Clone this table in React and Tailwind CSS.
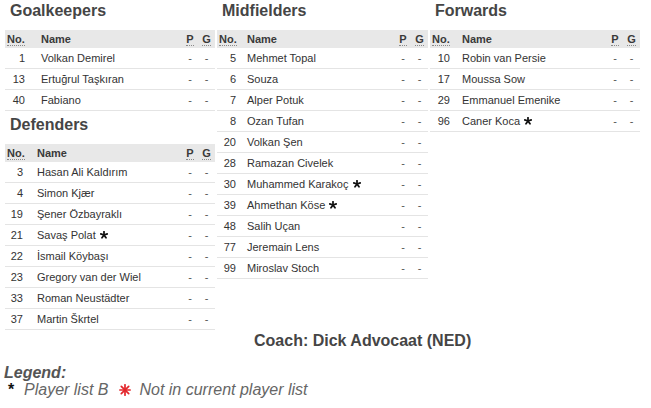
const goalkeepers = [
  { no: 1, name: 'Volkan Demirel' },
  { no: 13, name: 'Ertuğrul Taşkıran' },
  { no: 40, name: 'Fabiano' },
];

const defenders = [
  { no: 3, name: 'Hasan Ali Kaldırım' },
  { no: 4, name: 'Simon Kjær' },
  { no: 19, name: 'Şener Özbayraklı' },
  { no: 21, name: 'Savaş Polat', b: true },
  { no: 22, name: 'İsmail Köybaşı' },
  { no: 23, name: 'Gregory van der Wiel' },
  { no: 33, name: 'Roman Neustädter' },
  { no: 37, name: 'Martin Škrtel' },
];

const midfielders = [
  { no: 5, name: 'Mehmet Topal' },
  { no: 6, name: 'Souza' },
  { no: 7, name: 'Alper Potuk' },
  { no: 8, name: 'Ozan Tufan' },
  { no: 20, name: 'Volkan Şen' },
  { no: 28, name: 'Ramazan Civelek' },
  { no: 30, name: 'Muhammed Karakoç', b: true },
  { no: 39, name: 'Ahmethan Köse', b: true },
  { no: 48, name: 'Salih Uçan' },
  { no: 77, name: 'Jeremain Lens' },
  { no: 99, name: 'Miroslav Stoch' },
];

const forwards = [
  { no: 10, name: 'Robin van Persie' },
  { no: 17, name: 'Moussa Sow' },
  { no: 29, name: 'Emmanuel Emenike' },
  { no: 96, name: 'Caner Koca', b: true },
];

function Star() {
  return (
    <svg width="8" height="8" viewBox="0 0 10 10" className="inline-block ml-[4px] align-[0px]">
      <g stroke="#111" strokeWidth="2.2" strokeLinecap="round">
        <line x1="5" y1="5" x2="5" y2="0.8" />
        <line x1="5" y1="5" x2="9.1" y2="3.7" />
        <line x1="5" y1="5" x2="7.5" y2="8.5" />
        <line x1="5" y1="5" x2="2.5" y2="8.5" />
        <line x1="5" y1="5" x2="0.9" y2="3.7" />
      </g>
    </svg>
  );
}

function RedStar() {
  return (
    <svg width="12" height="12" viewBox="0 0 12 12" className="inline-block">
      <g stroke="#e3262b" strokeWidth="1.7" strokeLinecap="round">
        <line x1="6" y1="0.8" x2="6" y2="11.2" />
        <line x1="0.8" y1="6" x2="11.2" y2="6" />
        <line x1="2.3" y1="2.3" x2="9.7" y2="9.7" />
        <line x1="9.7" y1="2.3" x2="2.3" y2="9.7" />
      </g>
    </svg>
  );
}

function Abbr({ children }) {
  return <span className="border-b border-dotted border-[#8a8a8a] leading-[12px]">{children}</span>;
}

function Squad({ title, players, numPad, namePad, top }) {
  return (
    <div>
      <h2 className={`${top} mb-[10px] pl-[5px] text-[16px] leading-[18px] font-bold text-[#454545]`}>
        {title}
      </h2>
      <div className="text-[11px] text-[#333]">
        <div className="flex h-[18px] items-center bg-[#e8e8e8] font-bold text-[#3a3a3a]">
          <div className="w-[22px] pl-[2px]">
            <Abbr>No.</Abbr>
          </div>
          <div className={`flex-1 ${namePad}`}>Name</div>
          <div className="w-[16px] text-center">
            <Abbr>P</Abbr>
          </div>
          <div className="w-[17px] text-center">
            <Abbr>G</Abbr>
          </div>
        </div>
        {players.map((p) => (
          <div key={p.no} className="flex h-[21px] items-center border-b border-[#e4e4e4]">
            <div className={`w-[22px] text-right ${numPad}`}>{p.no}</div>
            <div className={`flex-1 ${namePad} whitespace-nowrap`}>
              {p.name}
              {p.b && <Star />}
            </div>
            <div className="w-[16px] text-center text-[#555]">-</div>
            <div className="w-[17px] text-center text-[#555]">-</div>
          </div>
        ))}
      </div>
    </div>
  );
}

export default function App() {
  return (
    <div className="w-[651px] h-[408px] overflow-hidden bg-white font-['Liberation_Sans',Arial,sans-serif]">
      <div className="flex gap-[2px] pl-[5px]">
        <div className="w-[210px]">
          <Squad title="Goalkeepers" players={goalkeepers} numPad="pr-[2px]" namePad="pl-[14px]" top="mt-[2px]" />
          <Squad title="Defenders" players={defenders} numPad="pr-[4px]" namePad="pl-[10px]" top="mt-[5px]" />
        </div>
        <div className="w-[211px]">
          <Squad title="Midfielders" players={midfielders} numPad="pr-[3px]" namePad="pl-[8px]" top="mt-[2px]" />
        </div>
        <div className="w-[210px]">
          <Squad title="Forwards" players={forwards} numPad="pr-[2px]" namePad="pl-[10px]" top="mt-[2px]" />
        </div>
      </div>

      <div className="mt-[2px] pl-[254px] text-[16px] leading-[18px] font-bold text-[#454545]">
        Coach: Dick Advocaat (NED)
      </div>

      <div className="mt-[14px] pl-[4px] text-[16px] leading-[17px] italic text-[#666]">
        <div className="font-bold text-[#555]">Legend:</div>
        <div className="flex items-center">
          <span className="w-[20px] pl-[4px] not-italic font-bold text-[#111]">*</span>
          <span>Player list B</span>
          <span className="ml-[11px] mr-[8px] flex items-center">
            <RedStar />
          </span>
          <span>Not in current player list</span>
        </div>
      </div>
    </div>
  );
}
